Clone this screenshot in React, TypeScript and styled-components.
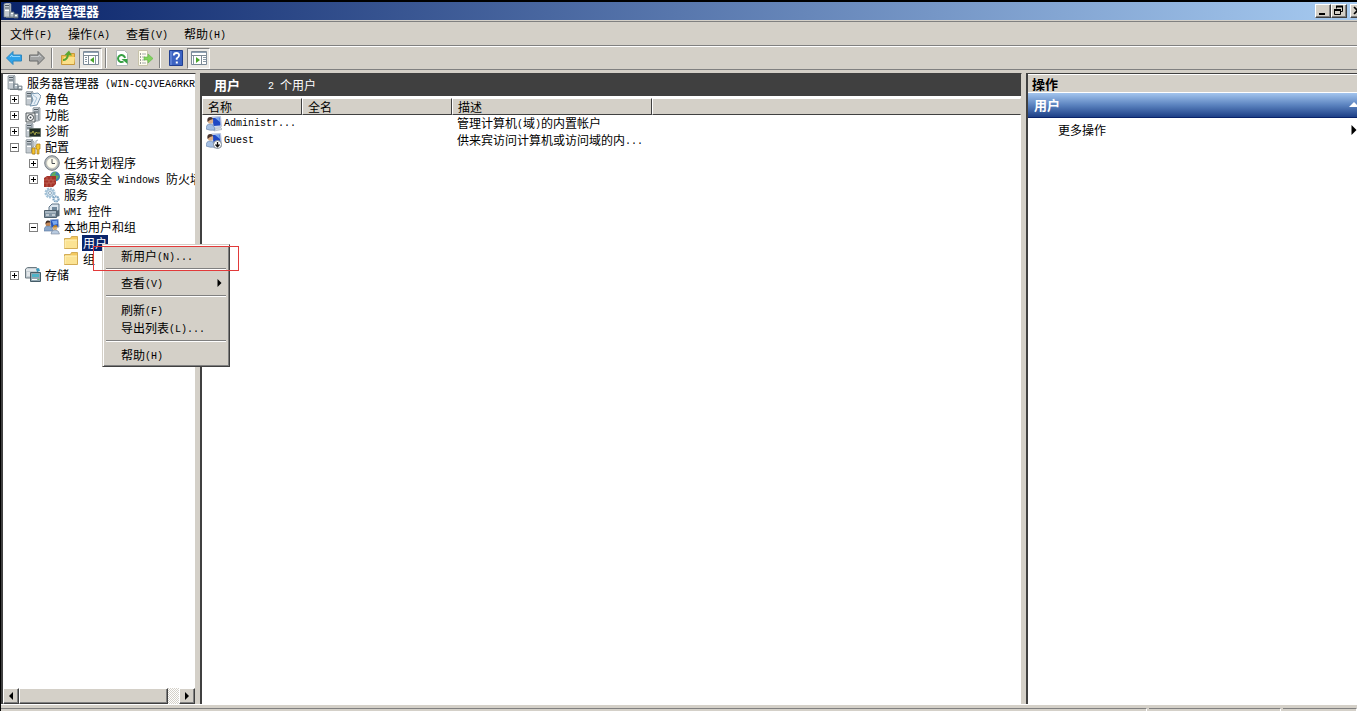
import React from "react";
import styled, { createGlobalStyle, css } from "styled-components";

const face = "#d4d0c8";
const shadow = "#808080";
const dark = "#404040";
const navy = "#0a246a";

const Global = createGlobalStyle`
  * { box-sizing: border-box; }
  html, body { margin: 0; padding: 0; }
  body {
    overflow: hidden;
    background: ${face};
    color: #000;
    font: 12px/16px "Noto Sans CJK SC", sans-serif;
  }
  button { font: inherit; color: inherit; padding: 0; margin: 0; border: 0; background: none; }
  ul { list-style: none; margin: 0; padding: 0; }
  h1, h2 { font-size: 13px; margin: 0; }
`;

const raised = css`
  background: ${face};
  border: 1px solid;
  border-color: #fff ${dark} ${dark} #fff;
  box-shadow: inset -1px -1px 0 ${shadow};
`;

/* ---------- text ---------- */

const Latin = styled.span`
  font-family: "Liberation Mono", monospace;
  font-size: 10px;
  line-height: 10px;
  vertical-align: 1px;
  white-space: pre;
`;

const Label = ({ children }: { children: string }) => (
  <>
    {children.split(/([\x20-\x7e]+)/).map((part, i) =>
      i % 2 ? <Latin key={i}>{part}</Latin> : part
    )}
  </>
);

/* ---------- icons ---------- */

const Svg = styled.svg`
  display: block;
  flex: none;
  width: 16px;
  height: 16px;
`;

const Icon = ({ children }: { children: React.ReactNode }) => (
  <Svg viewBox="0 0 16 16" aria-hidden="true">{children}</Svg>
);

const Tower = () => (
  <>
    <path d="M1 1l2-1h4l1 1v12l-2 1H1z" fill="#c3cad0" stroke="#7c868e" strokeWidth=".7" />
    <path d="M2 2.5h4M2 5h4" stroke="#4f5a62" />
    <path d="M2 7.5h4" stroke="#fff" />
    <path d="M6.5 1v12" stroke="#8e99a1" />
  </>
);

const ServerIcon = () => (
  <Icon>
    <Tower />
    <path d="M7 9h4v5H7zM11 11h4v4h-4z" fill="#b3bec6" stroke="#68757e" strokeWidth=".7" />
    <path d="M3 14.5h12" stroke="#737d84" />
    <path d="M8 10.5h2M12 12.5h2" stroke="#fff" />
  </Icon>
);

const RolesIcon = () => (
  <Icon>
    <Tower />
    <path d="M6 3l7-1 3 3-4 9-7 1 3-6z" fill="#eaf1f7" stroke="#7897b0" />
    <path d="M8 4l4 3-3 6" fill="none" stroke="#a3c1d8" />
  </Icon>
);

const FeaturesIcon = () => (
  <Icon>
    <g transform="translate(7 0)"><Tower /></g>
    <path d="M1 6h9v9H1z" fill="#e8e9e8" stroke="#4e565b" />
    <circle cx="5.5" cy="10.5" r="3" fill="#fff" stroke="#3c4449" />
    <circle cx="5.5" cy="10.5" r="1" fill="#3c4449" />
  </Icon>
);

const DiagnosticsIcon = () => (
  <Icon>
    <Tower />
    <path d="M4.5 5.5h11v8h-11z" fill="#202c24" stroke="#66716b" />
    <path d="M5 10h2l1-2 2 4 1-3 1 1h3" fill="none" stroke="#a1a044" />
  </Icon>
);

const ConfigIcon = () => (
  <Icon>
    <Tower />
    <path d="M7 1l2 2v4l-1 1v7h2V8l1-1V2l2-1" fill="#edf0f2" stroke="#87929b" strokeWidth=".7" />
    <path d="M12 5h3v5h-1v5h-2v-5h-1V7zM7 9h3v6H7z" fill="#f4c52e" stroke="#aa7a14" strokeWidth=".7" />
  </Icon>
);

const ClockIcon = () => (
  <Icon>
    <circle cx="8" cy="8" r="7.3" fill="#b5babd" stroke="#777f85" />
    <circle cx="8" cy="8" r="5.3" fill="#fffdf0" stroke="#c9c6b6" strokeWidth=".6" />
    <path d="M8 4v4.5h3" fill="none" stroke="#4a4d51" />
  </Icon>
);

const FirewallIcon = () => (
  <Icon>
    <circle cx="11" cy="5.5" r="5" fill="#3c83b0" />
    <path d="M7 4q3-4 5-3l-1 3 4 1-2 3-3 1z" fill="#62ac5c" />
    <path d="M0 7l3-2h9v8l-3 3H0z" fill="#a5342a" />
    <path d="M0 9h12M0 12h11M3 6v3M7 6v3M5 9v3M9 9v3M3 12v4M7 12v4" stroke="#d08070" strokeWidth=".5" />
  </Icon>
);

const GearsIcon = () => (
  <Icon>
    <circle cx="6" cy="6" r="4.300" fill="#e6f0f7" stroke="#a5c3d8" strokeWidth="2.400" strokeDasharray="2 .8" />
    <circle cx="6" cy="6" r="3.300" fill="#dfebf4" stroke="#8eb1ca" strokeWidth=".8" />
    <circle cx="6" cy="6" r="1.500" fill="#fff" stroke="#7799b3" strokeWidth=".8" />
    <circle cx="12" cy="12" r="2.600" fill="#d5e5f1" stroke="#7ba2c0" strokeWidth="2" strokeDasharray="1.500 .7" />
    <circle cx="12" cy="12" r="1" fill="#fff" />
  </Icon>
);

const WmiIcon = () => (
  <Icon>
    <path d="M5 4l3-3h7v6l-3 2H5z" fill="#dce5ed" stroke="#5e7487" />
    <path d="M8 4h5v4H8z" fill="#71899d" />
    <path d="M0.5 7.5h12v7H.5z" fill="#8497a6" stroke="#50606c" />
    <path d="M1 9h11" stroke="#cbd5dc" />
    <path d="M2 12h3M8 12h3" stroke="#fff" />
    <path d="M12.5 8l3-1v6l-3 1z" fill="#566978" />
  </Icon>
);

const GroupIcon = () => (
  <Icon>
    <path d="M6 1l8-1 1 8-8 1z" fill="#2856bc" stroke="#9bb1d2" />
    <path d="M8 2l5-.5.5 3.5-4 1z" fill="#78a8ee" />
    <circle cx="4" cy="5" r="2.5" fill="#c48755" />
    <path d="M1.5 5q0-4 3-3.500 2 .5 2 2l-3 0z" fill="#3c2b25" />
    <path d="M0 12q0-5 4-5t5 5z" fill="#89a6ca" stroke="#54739a" strokeWidth=".6" />
    <circle cx="11" cy="9" r="2.3" fill="#dfb277" />
    <path d="M7 15q0-4 4-4t4.500 4z" fill="#b9cbe0" stroke="#758599" strokeWidth=".6" />
    <path d="M8.700 8.500q1-3 3-2.500t1.800 2z" fill="#b98128" />
  </Icon>
);

const UserIcon = ({ disabled = false }: { disabled?: boolean }) => (
  <Icon>
    <path d="M5.500 1l9-.5 1 10-9 1z" fill="#e5ebf4" stroke="#a9b8d5" strokeWidth=".8" />
    <path d="M6.500 2l7.500-.5.500 8-7 .5z" fill="#1f48c4" />
    <path d="M9 2l4.500-.4.500 4.500z" fill="#7ba7ed" />
    <path d="M7 12.500l8-1 1 2-8 1.500z" fill="#d6dbe2" stroke="#9ea9b8" strokeWidth=".6" />
    <circle cx="4.500" cy="5" r="2.700" fill="#dcae86" />
    <path d="M1.500 6q-1-5 3-5 2 0 2.500 2l-3 1z" fill="#4a3530" />
    <path d="M0 13q0-5 4-5t5 6q-5 1-9-1z" fill="#a4bfe4" stroke="#607ca5" strokeWidth=".6" />
    {disabled && (
      <>
        <circle cx="11.500" cy="11.500" r="4" fill="#fff" stroke="#7c8791" />
        <path d="M11.500 9v4.500M9.500 11.500l2 2.300 2-2.300" fill="none" stroke="#111" strokeWidth="1.300" />
      </>
    )}
  </Icon>
);

const FolderIcon = () => (
  <Icon>
    <path d="M1.500 3.500h6l1-2h6v12h-13z" fill="#f3c95f" stroke="#d3ac55" />
    <path d="M2 5h12v8H2z" fill="#fbe394" />
    <path d="M2 5h12M2 5v8" stroke="#fff3bd" />
  </Icon>
);

const StorageIcon = () => (
  <Icon>
    <path d="M.5 2l2-1.500h9l1 1.500v9H.5z" fill="#c5ced4" stroke="#6d7a82" />
    <path d="M1 3h11M2 6h4M2 8h3" stroke="#fff" />
    <path d="M11 2l3-1 1 3-3 1z" fill="#3d9cc0" />
    <path d="M5.500 5.500h10v9h-10z" fill="#92a7b2" stroke="#455c67" />
    <path d="M7 7h7v3H7z" fill="#4fb3c8" />
    <path d="M7 12.500h5" stroke="#fff" />
    <path d="M13 12.500h1" stroke="#5ed35a" />
  </Icon>
);

const ArrowIcon = ({ forward = false }: { forward?: boolean }) => (
  <Icon>
    <path
      d={forward ? "M15.500 8L9 1.500v3.500H.5v6H9v3.500z" : "M.5 8L7 1.500v3.500h8.500v6H7v3.500z"}
      fill={forward ? "#a2a3a3" : "#2fa3ea"}
      stroke={forward ? "#686a6b" : "#2f86bd"}
    />
    <path d={forward ? "M2 6.500h8V5l2 2" : "M14 6.500H6V5L4 7"} fill="none" stroke={forward ? "#c9cbcc" : "#8ed7ff"} />
  </Icon>
);

const UpFolderIcon = () => (
  <Icon>
    <path d="M1.500 5.500h5l1-2h7v11h-13z" fill="#f1c14c" stroke="#c8983c" />
    <path d="M2 14l2-7h11l-1 7z" fill="#fbe08a" />
    <path d="M3 10q4 0 5-5" fill="none" stroke="#5aa52f" strokeWidth="2" />
    <path d="M4.500 5L9 .5l3 5z" fill="#5aa52f" />
  </Icon>
);

const PaneIcon = ({ right = false }: { right?: boolean }) => (
  <Icon>
    <path d="M.5 1.500h15v13H.5z" fill="#fff" stroke="#7d8b98" />
    <path d="M1 2.500h14" stroke="#8fa2b4" />
    <path d="M1 5.500h14" stroke="#7d8a94" />
    <path d={right ? "M10.500 6v8" : "M5.500 6v8"} stroke="#7d8a94" />
    <path
      d={right ? "M12 7.500h3M12 9.500h3M12 11.500h3M2.500 6v8" : "M2 7.500h2M2 9.500h2M2 11.500h2M12.500 6v8"}
      stroke="#8998a4"
    />
    <path d={right ? "M5 7l4 3-4 3z" : "M11 7l-4 3 4 3z"} fill="#4aa52c" />
  </Icon>
);

const RefreshIcon = () => (
  <Icon>
    <path d="M2.500.5h8l3 3v12h-11z" fill="#fff" stroke="#b4b9ba" />
    <path d="M11 8a3.500 3.500 0 1 0-1.500 3.500" fill="none" stroke="#36a044" strokeWidth="2" />
    <path d="M7.500 9h6v5z" fill="#36a044" />
  </Icon>
);

const ExportIcon = () => (
  <Icon>
    <path d="M1.500.5h9v15h-9z" fill="#fffdf0" stroke="#c7c3aa" />
    <path d="M3 4h1M3 7h1M3 10h1M3 13h1" stroke="#393d3e" />
    <path d="M5 4h4M5 7h3M5 10h3M5 13h4" stroke="#a7acae" />
    <path d="M7 7h4V4l5 4.500-5 4.500v-3H7z" fill="#7fd35c" stroke="#62b548" strokeWidth=".6" />
  </Icon>
);

const HelpIcon = () => (
  <Icon>
    <path d="M1.500.5h13v15h-13z" fill="#3c63c2" stroke="#203f91" />
    <path d="M3 1v14" stroke="#7d9ce2" />
    <path d="M5.800 5.500q0-2.500 2.700-2.500t2.600 2.300q0 1.700-2.400 3.200v1.300" fill="none" stroke="#fff" strokeWidth="1.800" />
    <path d="M7.800 11.500h2v2h-2z" fill="#fff" />
  </Icon>
);

/* ---------- window frame ---------- */

const Window = styled.div`
  display: flex;
  flex-direction: column;
  height: 100vh;
  border-top: 2px solid #000;
  border-left: 1px solid #000;
  background: ${face};
`;

const TitleBar = styled.header`
  display: flex;
  align-items: center;
  gap: 2px;
  height: 19px;
  padding-left: 2px;
  flex: none;
  color: #fff;
  background: linear-gradient(90deg, ${navy}, #a6caf0);
  border-bottom: 1px solid ${face};
`;

const WindowButtons = styled.div`
  display: flex;
  margin-left: auto;
  margin-right: -9px;
`;

const WindowButton = styled.button<{ $apart?: boolean }>`
  ${raised}
  width: 16px;
  height: 14px;
  margin-left: ${(p) => (p.$apart ? 3 : 0)}px;
  color: #000;
  svg { display: block; width: 14px; height: 12px; }
`;

const MenuBar = styled.nav`
  display: flex;
  align-items: center;
  height: 25px;
  padding-left: 1px;
  flex: none;
  border-top: 1px solid ${shadow};
  border-bottom: 1px solid ${shadow};
`;

const MenuButton = styled.button`
  padding: 0 8px;
  white-space: nowrap;
`;

const ToolBar = styled.div`
  display: flex;
  align-items: center;
  height: 24px;
  padding-left: 1px;
  flex: none;
  border-top: 1px solid #fff;
  border-bottom: 1px solid ${shadow};
`;

const ToolButton = styled.button<{ $pressed?: boolean }>`
  display: grid;
  place-items: center;
  width: 23px;
  height: 21px;
  border: 1px solid transparent;
  ${(p) =>
    p.$pressed &&
    css`
      border-color: ${shadow} #fff #fff ${shadow};
      background: #eceae6;
    `}
`;

const ToolDivider = styled.span`
  width: 2px;
  height: 20px;
  margin: 0 3px;
  border-left: 1px solid ${shadow};
  border-right: 1px solid #fff;
`;

const Panels = styled.main`
  display: grid;
  grid-template-columns: 195px minmax(0, 822px) minmax(0, 1fr);
  gap: 4px;
  flex: 1;
  min-height: 0;
  padding-top: 3px;
`;

const sunken = css`
  display: flex;
  flex-direction: column;
  min-width: 0;
  overflow: hidden;
  background: #fff;
  border-left: 2px solid ${dark};
  border-top: 1px solid ${dark};
`;

/* ---------- tree ---------- */

const TreePanel = styled.aside`
  ${sunken}
  border-right: 1px solid ${face};
`;

const Tree = styled.ul`
  flex: 1;
  padding-top: 1px;
  overflow: hidden;
`;

const TreeRow = styled.li<{ $level: number }>`
  display: flex;
  align-items: center;
  height: 16px;
  padding-left: ${(p) => (p.$level ? p.$level * 19 - 12 : 4)}px;
  white-space: nowrap;
`;

const Toggle = styled.button`
  display: block;
  flex: none;
  width: 9px;
  height: 9px;
  margin-right: 6px;
  background: #fff;
  border: 1px solid ${shadow};
  svg { display: block; width: 7px; height: 7px; }
`;

const ToggleGap = styled.span`
  flex: none;
  width: 15px;
`;

const NodeText = styled.span<{ $selected?: boolean }>`
  margin-left: 3px;
  padding: 0 1px;
  line-height: 16px;
  color: ${(p) => (p.$selected ? "#fff" : "#000")};
  background: ${(p) => (p.$selected ? navy : "transparent")};
`;

const ScrollBar = styled.div`
  display: flex;
  height: 16px;
  flex: none;
  background: repeating-conic-gradient(${face} 0 25%, #fff 0 50%) 0 0 / 2px 2px;
`;

const ScrollButton = styled.button`
  ${raised}
  display: grid;
  place-items: center;
  width: 16px;
  flex: none;
  svg { width: 8px; height: 8px; }
`;

const ScrollThumb = styled.div`
  ${raised}
  flex: 1;
  margin-right: 11px;
`;

type Node = {
  level: number;
  text: string;
  icon: React.ReactNode;
  toggle?: "+" | "-";
  selected?: boolean;
};

const nodes: Node[] = [
  { level: 0, text: "服务器管理器 (WIN-CQJVEA6RKR", icon: <ServerIcon /> },
  { level: 1, text: "角色", icon: <RolesIcon />, toggle: "+" },
  { level: 1, text: "功能", icon: <FeaturesIcon />, toggle: "+" },
  { level: 1, text: "诊断", icon: <DiagnosticsIcon />, toggle: "+" },
  { level: 1, text: "配置", icon: <ConfigIcon />, toggle: "-" },
  { level: 2, text: "任务计划程序", icon: <ClockIcon />, toggle: "+" },
  { level: 2, text: "高级安全 Windows 防火墙", icon: <FirewallIcon />, toggle: "+" },
  { level: 2, text: "服务", icon: <GearsIcon /> },
  { level: 2, text: "WMI 控件", icon: <WmiIcon /> },
  { level: 2, text: "本地用户和组", icon: <GroupIcon />, toggle: "-" },
  { level: 3, text: "用户", icon: <FolderIcon />, selected: true },
  { level: 3, text: "组", icon: <FolderIcon /> },
  { level: 1, text: "存储", icon: <StorageIcon />, toggle: "+" },
];

/* ---------- list ---------- */

const ListPanel = styled.section`
  ${sunken}
  border-right: 1px solid ${face};
`;

const ListHeader = styled.div`
  display: flex;
  align-items: center;
  gap: 28px;
  height: 22px;
  flex: none;
  padding-left: 12px;
  color: #fff;
  background: ${dark};
`;

const Table = styled.table`
  width: 100%;
  margin-top: 2px;
  table-layout: fixed;
  border-collapse: separate;
  border-spacing: 0;
`;

const Th = styled.th<{ $width?: number }>`
  width: ${(p) => (p.$width ? p.$width + "px" : "auto")};
  height: 17px;
  padding: 0 5px;
  text-align: left;
  font-weight: normal;
  line-height: 15px;
  background: ${face};
  border: 1px solid;
  border-color: #fff ${(p) => (p.$width ? dark : face)} ${dark} #fff;
`;

const Td = styled.td`
  height: 17px;
  padding: 0 0 0 5px;
  line-height: 16px;
  vertical-align: top;
  white-space: nowrap;
`;

const UserName = styled.span`
  display: flex;
  align-items: center;
  gap: 2px;
  margin-left: -1px;
  height: 17px;
`;

/* ---------- actions ---------- */

const ActionPanel = styled.aside`
  ${sunken}
`;

const ActionHeading = styled.h2`
  height: 17px;
  flex: none;
  padding-left: 4px;
  margin-top: 1px;
  line-height: 17px;
  background: ${face};
`;

const ActionGroup = styled.button`
  display: flex;
  align-items: center;
  justify-content: space-between;
  height: 25px;
  flex: none;
  margin-top: 1px;
  padding-left: 6px;
  color: #fff;
  font-size: 13px;
  font-weight: bold;
  background: linear-gradient(#a3c5ee, #5b83bf 50%, #1d3f87);
  border-bottom: 1px solid ${navy};
  svg { width: 8px; height: 8px; }
`;

const ActionItem = styled.button`
  display: flex;
  align-items: center;
  justify-content: space-between;
  height: 24px;
  flex: none;
  padding-left: 30px;
  svg { width: 6px; height: 10px; }
`;

/* ---------- status ---------- */

const StatusBar = styled.footer`
  display: grid;
  grid-template-columns: 1fr 132px 74px;
  gap: 2px;
  height: 7px;
  flex: none;
  padding-top: 3px;
  border-top: 1px solid #fff;
`;

const StatusCell = styled.div`
  border-top: 1px solid ${shadow};
  border-right: 1px solid #fff;
`;

/* ---------- context menu ---------- */

const ContextMenu = styled.div`
  position: absolute;
  left: 102px;
  top: 244px;
  width: 128px;
  padding: 2px;
  background: ${face};
  border: 1px solid;
  border-color: ${face} ${dark} ${dark} ${face};
  box-shadow: inset 1px 1px 0 #fff, inset -1px -1px 0 ${shadow};
`;

const ContextItem = styled.button`
  display: flex;
  align-items: center;
  justify-content: space-between;
  width: 100%;
  height: 18px;
  padding: 0 5px 0 16px;
  svg { width: 5px; height: 8px; }
`;

const ContextDivider = styled.hr`
  height: 2px;
  margin: 3px 1px 4px;
  border: 0;
  border-top: 1px solid ${shadow};
  border-bottom: 1px solid #fff;
`;

const Highlight = styled.div`
  position: absolute;
  left: 93px;
  top: 246px;
  width: 146px;
  height: 25px;
  border: 1px solid #e23a3a;
  pointer-events: none;
`;

const RightArrow = () => (
  <svg viewBox="0 0 4 8" aria-hidden="true"><path d="M0 0l4 4-4 4z" /></svg>
);

export default function App() {
  return (
    <>
      <Global />
      <Window>
        <TitleBar>
          <ServerIcon />
          <h1>服务器管理器</h1>
          <WindowButtons>
            <WindowButton aria-label="最小化">
              <svg viewBox="0 0 14 12"><path d="M3 9h6" stroke="#000" strokeWidth="2" /></svg>
            </WindowButton>
            <WindowButton aria-label="还原">
              <svg viewBox="0 0 14 12" fill="none" stroke="#000">
                <path d="M4.500 3.500V1.500h6v5h-2" />
                <path d="M4 1.500h7M2 5h7" strokeWidth="2" />
                <path d="M2.500 4.500h6v5h-6z" />
              </svg>
            </WindowButton>
            <WindowButton $apart aria-label="关闭">
              <svg viewBox="0 0 14 12"><path d="M3 2l7 7M10 2L3 9" stroke="#000" strokeWidth="1.600" /></svg>
            </WindowButton>
          </WindowButtons>
        </TitleBar>

        <MenuBar>
          {["文件(F)", "操作(A)", "查看(V)", "帮助(H)"].map((t) => (
            <MenuButton key={t}><Label>{t}</Label></MenuButton>
          ))}
        </MenuBar>

        <ToolBar>
          <ToolButton aria-label="后退"><ArrowIcon /></ToolButton>
          <ToolButton aria-label="前进"><ArrowIcon forward /></ToolButton>
          <ToolDivider />
          <ToolButton aria-label="向上"><UpFolderIcon /></ToolButton>
          <ToolButton $pressed aria-label="显示控制台树"><PaneIcon /></ToolButton>
          <ToolDivider />
          <ToolButton aria-label="刷新"><RefreshIcon /></ToolButton>
          <ToolButton aria-label="导出列表"><ExportIcon /></ToolButton>
          <ToolDivider />
          <ToolButton aria-label="帮助"><HelpIcon /></ToolButton>
          <ToolButton $pressed aria-label="显示操作窗格"><PaneIcon right /></ToolButton>
        </ToolBar>

        <Panels>
          <TreePanel>
            <Tree>
              {nodes.map((n) => (
                <TreeRow key={n.text} $level={n.level}>
                  {n.toggle ? (
                    <Toggle aria-label={n.toggle === "+" ? "展开" : "折叠"}>
                      <svg viewBox="0 0 7 7" stroke="#000">
                        <path d={n.toggle === "+" ? "M1 3.500h5M3.500 1v5" : "M1 3.500h5"} />
                      </svg>
                    </Toggle>
                  ) : (
                    n.level > 0 && <ToggleGap />
                  )}
                  {n.icon}
                  <NodeText $selected={n.selected}><Label>{n.text}</Label></NodeText>
                </TreeRow>
              ))}
            </Tree>
            <ScrollBar>
              <ScrollButton aria-label="向左滚动">
                <svg viewBox="0 0 8 8"><path d="M6 0v8L2 4z" /></svg>
              </ScrollButton>
              <ScrollThumb />
              <ScrollButton aria-label="向右滚动">
                <svg viewBox="0 0 8 8"><path d="M2 0v8l4-4z" /></svg>
              </ScrollButton>
            </ScrollBar>
          </TreePanel>

          <ListPanel>
            <ListHeader>
              <h2>用户</h2>
              <span><Label>2 个用户</Label></span>
            </ListHeader>
            <Table>
              <thead>
                <tr>
                  <Th $width={100}>名称</Th>
                  <Th $width={150}>全名</Th>
                  <Th $width={200}>描述</Th>
                  <Th aria-hidden="true" />
                </tr>
              </thead>
              <tbody>
                <tr>
                  <Td><UserName><UserIcon /><Latin>Administr...</Latin></UserName></Td>
                  <Td />
                  <Td><Label>管理计算机(域)的内置帐户</Label></Td>
                  <Td />
                </tr>
                <tr>
                  <Td><UserName><UserIcon disabled /><Latin>Guest</Latin></UserName></Td>
                  <Td />
                  <Td><Label>供来宾访问计算机或访问域的内...</Label></Td>
                  <Td />
                </tr>
              </tbody>
            </Table>
          </ListPanel>

          <ActionPanel>
            <ActionHeading>操作</ActionHeading>
            <ActionGroup>
              用户
              <svg viewBox="0 0 8 8" aria-hidden="true"><path d="M0 6l5-5 5 5z" fill="#fff" /></svg>
            </ActionGroup>
            <ActionItem>
              更多操作
              <RightArrow />
            </ActionItem>
          </ActionPanel>
        </Panels>

        <StatusBar>
          <StatusCell />
          <StatusCell />
          <StatusCell />
        </StatusBar>
      </Window>

      <ContextMenu role="menu">
        <ContextItem role="menuitem"><span><Label>新用户(N)...</Label></span></ContextItem>
        <ContextDivider />
        <ContextItem role="menuitem"><span><Label>查看(V)</Label></span><RightArrow /></ContextItem>
        <ContextDivider />
        <ContextItem role="menuitem"><span><Label>刷新(F)</Label></span></ContextItem>
        <ContextItem role="menuitem"><span><Label>导出列表(L)...</Label></span></ContextItem>
        <ContextDivider />
        <ContextItem role="menuitem"><span><Label>帮助(H)</Label></span></ContextItem>
      </ContextMenu>
      <Highlight />
    </>
  );
}
